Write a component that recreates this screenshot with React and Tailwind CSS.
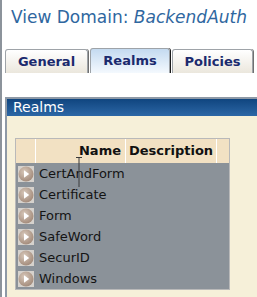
const realms = ["CertAndForm", "Certificate", "Form", "SafeWord", "SecurID", "Windows"];

function RowIcon() {
  return (
    <svg width="16" height="16" viewBox="0 0 16 16" className="shrink-0">
      <defs>
        <radialGradient id="ball" cx="40%" cy="35%" r="70%">
          <stop offset="0%" stopColor="#d8c8ba" />
          <stop offset="100%" stopColor="#a08878" />
        </radialGradient>
      </defs>
      <rect width="16" height="16" fill="#d6d2cd" />
      <circle cx="8" cy="8" r="7.5" fill="url(#ball)" />
      <path d="M6 4.2 L11.2 8 L6 11.8 Z" fill="#ffffff" />
    </svg>
  );
}

function Tab({ label, active, width }) {
  return (
    <div
      className={`flex items-center justify-center rounded-t-[3px] border border-[#9ea3a8] border-b-0 ${
        active
          ? "h-[25px] bg-gradient-to-b from-[#c4daf0] to-[#f4f9fe] shadow-[1px_0_0_#1a1a1a]"
          : "h-[24px] bg-gradient-to-b from-[#ffffff] to-[#ebe7dd] shadow-[1px_0_0_#707070]"
      }`}
      style={{ width }}
    >
      <span className="text-[13px] font-bold text-[#1b2a6e]">{label}</span>
    </div>
  );
}

export default function App() {
  return (
    <div
      className="relative w-[257px] h-[297px] overflow-hidden bg-white border-l-2 border-[#8c939b]"
      style={{ fontFamily: '"DejaVu Sans", Verdana, sans-serif' }}
    >
      <div className="pl-[9px] pt-[6px] text-[17px] leading-[22px] text-[#2f67a0] whitespace-nowrap">
        View Domain: <span className="italic">BackendAuth</span>
      </div>

      <div className="mt-[20px] flex items-end pl-[3px] gap-[2px] h-[25px]">
        <Tab label="General" width={83} />
        <Tab label="Realms" width={80} active />
        <Tab label="Policies" width={81} />
      </div>

      <div className="ml-[3px] mt-[24px] border-l-2 border-t-2 border-[#8e99a6] bg-[#f6f0d9] h-[220px]">
        <div className="h-[17px] bg-gradient-to-b from-[#0f457f] to-[#2c67a6] pl-[6px] text-[14px] leading-[16px] text-white">
          Realms
        </div>

        <div className="ml-[8px] mt-[22px] w-[215px] border border-[#b9b9b9] bg-[#8b9299]">
          <div className="flex h-[24px] bg-white gap-px text-[13px] font-bold text-[#111]">
            <div className="w-[19px] bg-[#f2e1c3]" />
            <div className="w-[89px] bg-[#f2e1c3] flex items-center justify-end pr-[4px]">Name</div>
            <div className="w-[90px] bg-[#f2e1c3] flex items-center pl-[3px]">Description</div>
            <div className="flex-1 bg-[#f2e1c3]" />
          </div>
          {realms.map((r) => (
            <div key={r} className="flex items-center h-[21px] pl-[2px] gap-[5px] text-[13px] text-[#141414]">
              <RowIcon />
              <span>{r}</span>
            </div>
          ))}
        </div>
      </div>

      <svg className="absolute left-[73px] top-[157px]" width="8" height="30" viewBox="0 0 8 30">
        <path d="M1 0.5 H7 M4 0.5 V30" stroke="#3a3a3a" strokeWidth="1" fill="none" />
      </svg>
    </div>
  );
}
